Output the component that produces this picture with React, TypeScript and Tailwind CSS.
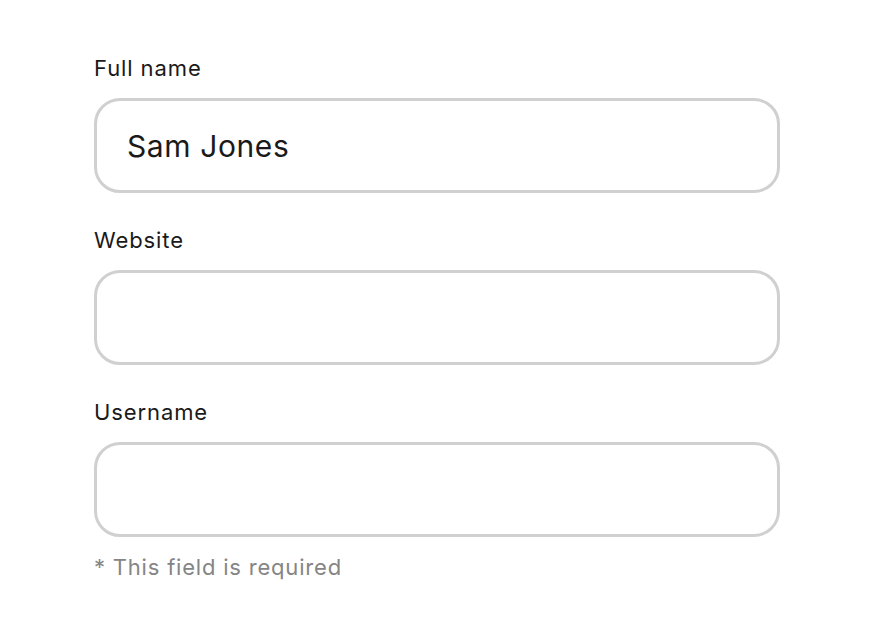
function Field({ label, value }: { label: string; value?: string }) {
  return (
    <div className="flex flex-col">
      <label className="text-[22px] leading-[32px] tracking-[0.9px] text-[#1a1a1a]">{label}</label>
      <input
        type="text"
        defaultValue={value}
        className="mt-[14px] h-[95px] w-[686px] rounded-[26px] border-[3px] border-[#d0d0d0] bg-white px-[30px] text-[30px] tracking-[0.6px] text-[#1a1a1a] outline-none"
      />
    </div>
  );
}

export default function App() {
  return (
    <div className="min-h-[640px] bg-white pl-[94px] pt-[52px] font-['Inter',sans-serif]">
      <form className="flex flex-col gap-[31px]">
        <Field label="Full name" value="Sam Jones" />
        <Field label="Website" />
        <div className="flex flex-col">
          <Field label="Username" />
          <p className="mt-[14px] text-[22px] leading-[32px] tracking-[0.8px] text-[#858585]">
            * This field is required
          </p>
        </div>
      </form>
    </div>
  );
}
